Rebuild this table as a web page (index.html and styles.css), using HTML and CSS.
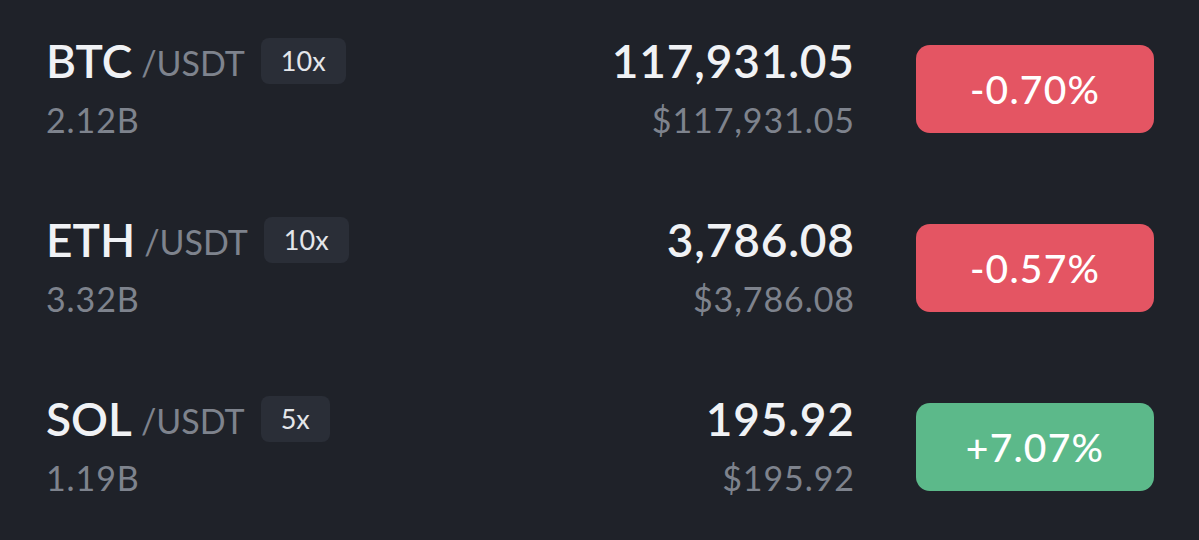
FILE: index.html
```html
<!DOCTYPE html>
<html>
<head>
<meta charset="utf-8">
<link rel="stylesheet" href="styles.css">
</head>
<body>
<div class="list">
  <div class="row">
    <div class="pair">
      <div class="line1"><span class="base">BTC</span><span class="quote">/USDT</span><span class="lev">10x</span></div>
      <div class="vol">2.12B</div>
    </div>
    <div class="price">
      <div class="last">117,931.05</div>
      <div class="fiat">$117,931.05</div>
    </div>
    <div class="chg down">-0.70%</div>
  </div>
  <div class="row">
    <div class="pair">
      <div class="line1"><span class="base">ETH</span><span class="quote">/USDT</span><span class="lev">10x</span></div>
      <div class="vol">3.32B</div>
    </div>
    <div class="price">
      <div class="last">3,786.08</div>
      <div class="fiat">$3,786.08</div>
    </div>
    <div class="chg down">-0.57%</div>
  </div>
  <div class="row">
    <div class="pair">
      <div class="line1"><span class="base">SOL</span><span class="quote">/USDT</span><span class="lev">5x</span></div>
      <div class="vol">1.19B</div>
    </div>
    <div class="price">
      <div class="last">195.92</div>
      <div class="fiat">$195.92</div>
    </div>
    <div class="chg up">+7.07%</div>
  </div>
</div>
</body>
</html>
```
FILE: styles.css
```css
html, body {
  margin: 0;
  padding: 0;
  background: #1f2229;
  height: 540px;
  overflow: hidden;
}
body {
  font-family: Lato, "Noto Sans", sans-serif;
  color: #eef0f3;
}
.list {
  display: flex;
  flex-direction: column;
  gap: 91px;
  padding: 45px 45px 0 46px;
}
.row {
  display: grid;
  grid-template-columns: 1fr auto 238px;
  grid-template-rows: 88px;
  column-gap: 62px;
  align-items: start;
}
.pair, .price {
  display: flex;
  flex-direction: column;
  gap: 25px;
}
.pair, .price { margin-top: -1px; }
.price { align-items: flex-end; }
.line1 {
  display: flex;
  align-items: center;
  height: 34px;
}
.base {
  display: inline-block;
  min-width: 86px;
  white-space: nowrap;
  font-size: 46px;
  font-weight: 600;
  line-height: 34px;
  color: #f0f2f5;
}
.quote {
  font-size: 34px;
  line-height: 34px;
  color: #7e838d;
  margin-left: 9px;
  padding-top: 4px;
}
.lev {
  margin-left: 16px;
  background: #2a2e37;
  color: #e4e6ea;
  font-size: 27px;
  height: 46px;
  line-height: 46px;
  padding: 0 20px;
  border-radius: 8px;
}
.vol, .fiat {
  font-size: 34px;
  line-height: 34px;
  color: #7e838d;
  letter-spacing: 0.9px;
}
.fiat { margin-right: -0.9px; }
.last {
  font-size: 46px;
  font-weight: 600;
  line-height: 34px;
  color: #f0f2f5;
  letter-spacing: 0.8px;
  margin-right: -0.8px;
}
.chg {
  height: 88px;
  border-radius: 14px;
  display: flex;
  align-items: center;
  justify-content: center;
  font-size: 39px;
  font-weight: 500;
  letter-spacing: 1.2px;
  color: #ffffff;
}
.down { background: #e45563; }
.up { background: #5cb98a; }
```
